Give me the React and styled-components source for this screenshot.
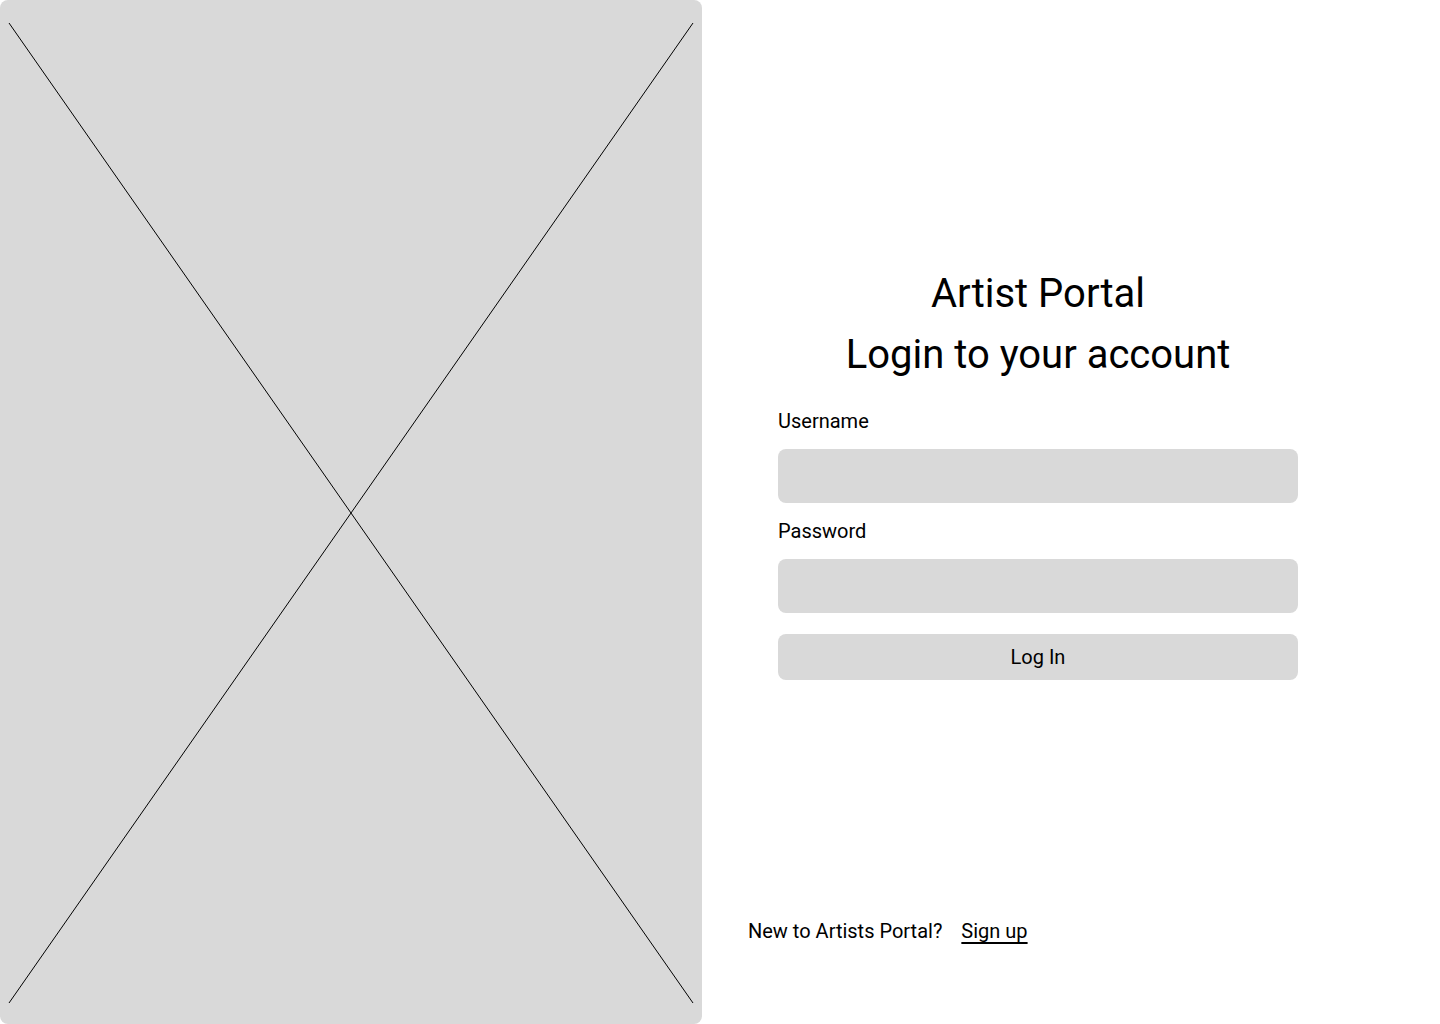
import React from "react";
import styled, { createGlobalStyle } from "styled-components";

const GlobalStyle = createGlobalStyle`
  html, body {
    margin: 0;
    padding: 0;
    background: #ffffff;
  }
  body {
    font-family: Roboto, "Noto Sans", "Liberation Sans", sans-serif;
    color: #000000;
  }
  * { box-sizing: border-box; }
`;

const Page = styled.div`
  display: flex;
  width: 1440px;
  height: 1024px;
  background: #ffffff;
`;

const ImagePanel = styled.div`
  flex: 0 0 702px;
  height: 1024px;
  background: #d9d9d9;
  border-radius: 8px;
  overflow: hidden;
  svg {
    display: block;
  }
`;

const Side = styled.div`
  flex: 1;
  display: flex;
  flex-direction: column;
  padding: 263px 0 81px 46px;
`;

const Form = styled.form`
  width: 520px;
  margin-left: 30px;
  display: flex;
  flex-direction: column;
`;

const Title = styled.h1`
  margin: 0;
  font-size: 40px;
  line-height: 61px;
  font-weight: 400;
  text-align: center;
  white-space: nowrap;
`;

const Label = styled.label`
  display: block;
  font-size: 20px;
  line-height: 24px;
  margin-top: ${(p) => p.$top}px;
  margin-bottom: 16px;
`;

const Input = styled.input`
  display: block;
  width: 100%;
  height: 54px;
  border: none;
  border-radius: 8px;
  background: #d9d9d9;
  padding: 0 16px;
  font-family: inherit;
  font-size: 20px;
  outline: none;
`;

const Button = styled.button`
  margin-top: 21px;
  width: 100%;
  height: 46px;
  border: none;
  border-radius: 8px;
  background: #d9d9d9;
  font-family: inherit;
  font-size: 20px;
  line-height: 24px;
  color: #000000;
  padding: 0;
  cursor: pointer;
`;

const Footer = styled.div`
  margin-top: auto;
  display: flex;
  gap: 19px;
  font-size: 20px;
  line-height: 24px;
`;

const SignUp = styled.a`
  color: #000000;
  text-decoration: underline;
  text-decoration-skip-ink: none;
  text-underline-offset: 4px;
  cursor: pointer;
`;

export default function App() {
  return (
    <>
      <GlobalStyle />
      <Page>
        <ImagePanel>
          <svg width="702" height="1024" viewBox="0 0 702 1024">
            <line x1="9" y1="23" x2="693" y2="1003" stroke="#000" strokeWidth="1" />
            <line x1="693" y1="23" x2="9" y2="1003" stroke="#000" strokeWidth="1" />
          </svg>
        </ImagePanel>
        <Side>
          <Form onSubmit={(e) => e.preventDefault()}>
            <Title>Artist Portal</Title>
            <Title>Login to your account</Title>
            <Label $top={24} htmlFor="username">Username</Label>
            <Input id="username" type="text" />
            <Label $top={16} htmlFor="password">Password</Label>
            <Input id="password" type="password" />
            <Button type="submit">Log In</Button>
          </Form>
          <Footer>
            <span>New to Artists Portal?</span>
            <SignUp>Sign up</SignUp>
          </Footer>
        </Side>
      </Page>
    </>
  );
}
